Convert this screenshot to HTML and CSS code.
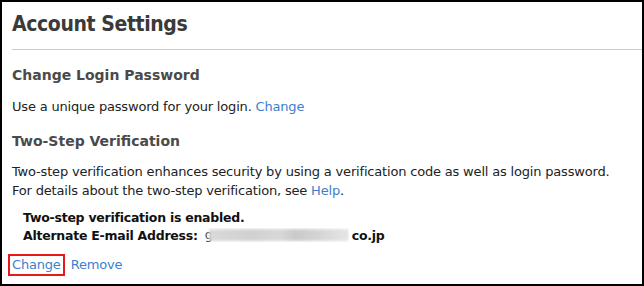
FILE: index.html
```html
<!DOCTYPE html>
<html>
<head>
<meta charset="utf-8">
<link rel="stylesheet" href="styles.css">
</head>
<body>
<div class="frame">
  <h1 class="title">Account Settings</h1>
  <hr class="rule">
  <section class="section">
    <h2 class="heading">Change Login Password</h2>
    <p class="text">Use a unique password for your login. <a class="link" href="#">Change</a></p>
  </section>
  <section class="section">
    <h2 class="heading">Two-Step Verification</h2>
    <p class="text">Two-step verification enhances security by using a verification code as well as login password.<br>For details about the two-step verification, see <a class="link" href="#">Help</a>.</p>
    <div class="status">
      <div class="status-line">Two-step verification is enabled.</div>
      <div class="status-line">Alternate E-mail Address: <span class="masked"><span class="masked-g">g</span><span class="blur"></span></span>co.jp</div>
    </div>
    <div class="actions">
      <a class="link highlighted" href="#">Change</a>
      <a class="link" href="#">Remove</a>
    </div>
  </section>
</div>
</body>
</html>
```
FILE: styles.css
```css
html, body {
  margin: 0;
  padding: 0;
  background: #fff;
}
.frame {
  box-sizing: border-box;
  width: 644px;
  height: 286px;
  border: 2px solid #000;
  padding: 0 0 0 10px;
  font-family: "DejaVu Sans", sans-serif;
  color: #222;
  overflow: hidden;
}
.title {
  margin: 0;
  padding-top: 8px;
  font-family: "DejaVu Sans Condensed", "DejaVu Sans", sans-serif;
  font-stretch: condensed;
  font-size: 21px;
  line-height: 28px;
  font-weight: bold;
  color: #3a3a3a;
  letter-spacing: -0.4px;
}
.rule {
  margin: 11px 0 0 0;
  border: 0;
  border-top: 1px solid #ccc;
  height: 0;
}
.section {
  margin: 0;
}
.heading {
  margin: 15px 0 0 0;
  font-size: 14px;
  line-height: 20px;
  font-weight: bold;
  color: #4a4a4a;
  letter-spacing: 0;
}
.text {
  margin: 12px 0 0 0;
  font-size: 13px;
  line-height: 19px;
  letter-spacing: -0.18px;
}
.section + .section .heading {
  margin-top: 15px;
}
.section + .section .text {
  margin-top: 11px;
}
.link {
  color: #3d7fce;
  text-decoration: none;
}
.status {
  margin: 9px 0 0 11px;
  font-size: 12.5px;
  line-height: 18px;
  font-weight: bold;
  color: #111;
  letter-spacing: -0.25px;
}
.masked {
  display: inline-block;
  position: relative;
  width: 144px;
  height: 14px;
  vertical-align: -2px;
  margin-left: 3px;
  margin-right: 3px;
  overflow: hidden;
}
.masked-g {
  position: absolute;
  left: 0;
  top: -2px;
  font-weight: normal;
  color: #444;
}
.blur {
  position: absolute;
  left: 4px;
  right: 0;
  top: 1px;
  bottom: 1px;
  background: linear-gradient(90deg, #dadada 0%, #d0d0d0 30%, #d8d8d8 50%, #c9c9c9 62%, #d6d6d6 80%, #e6e6e6 100%);
  filter: blur(1.5px);
}
.actions {
  margin: 9px 0 0 0;
  font-size: 13px;
  line-height: 18px;
  letter-spacing: -0.18px;
}
.highlighted {
  display: inline-block;
  border: 2px solid #e8171b;
  margin-left: -4px;
  padding: 0 2px 0 2px;
  line-height: 18px;
  margin-right: 2px;
}
```
